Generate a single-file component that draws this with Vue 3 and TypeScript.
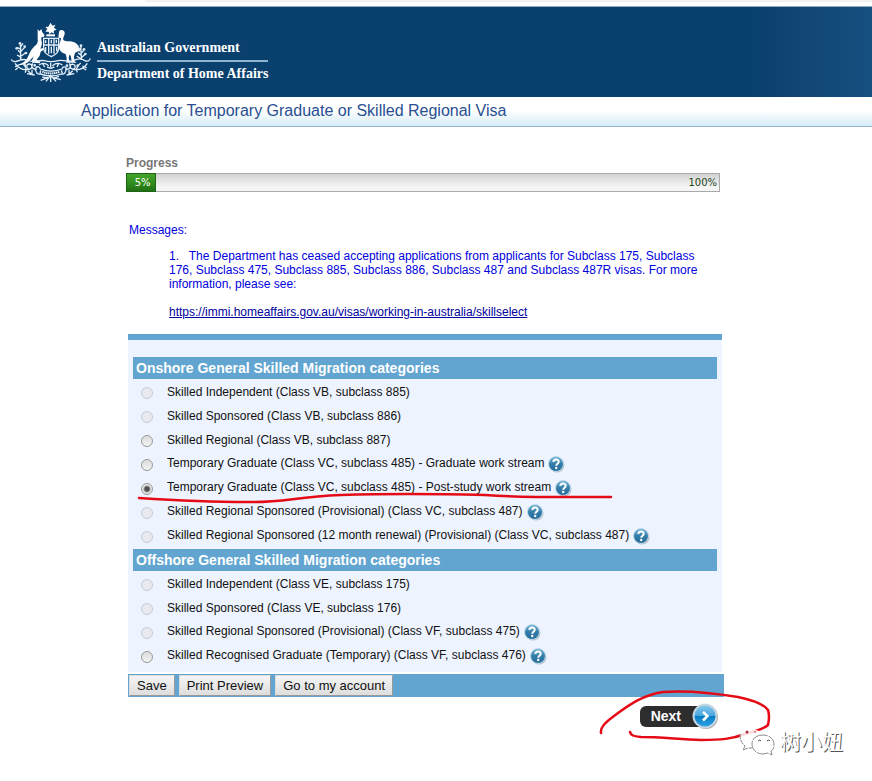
<script setup lang="ts">
import { ref } from 'vue'

interface Visa {
  id: string
  label: string
  disabled?: boolean
  help?: boolean
}

interface Category {
  title: string
  visas: Visa[]
}

const progress = 5
const selected = ref('485-study')

const categories: Category[] = [
  {
    title: 'Onshore General Skilled Migration categories',
    visas: [
      { id: '885', label: 'Skilled Independent (Class VB, subclass 885)', disabled: true },
      { id: '886', label: 'Skilled Sponsored (Class VB, subclass 886)', disabled: true },
      { id: '887', label: 'Skilled Regional (Class VB, subclass 887)' },
      { id: '485-work', label: 'Temporary Graduate (Class VC, subclass 485) - Graduate work stream', help: true },
      { id: '485-study', label: 'Temporary Graduate (Class VC, subclass 485) - Post-study work stream', help: true },
      { id: '487', label: 'Skilled Regional Sponsored (Provisional) (Class VC, subclass 487)', disabled: true, help: true },
      { id: '487-renewal', label: 'Skilled Regional Sponsored (12 month renewal) (Provisional) (Class VC, subclass 487)', disabled: true, help: true },
    ],
  },
  {
    title: 'Offshore General Skilled Migration categories',
    visas: [
      { id: '175', label: 'Skilled Independent (Class VE, subclass 175)', disabled: true },
      { id: '176', label: 'Skilled Sponsored (Class VE, subclass 176)', disabled: true },
      { id: '475', label: 'Skilled Regional Sponsored (Provisional) (Class VF, subclass 475)', disabled: true, help: true },
      { id: '476', label: 'Skilled Recognised Graduate (Temporary) (Class VF, subclass 476)', help: true },
    ],
  },
]

const actions = ['Save', 'Print Preview', 'Go to my account']
</script>

<template>
  <div class="page">
    <div class="browser-edge"></div>
    <header class="banner">
      <svg class="crest" viewBox="30 20 246 183" aria-hidden="true">
        <g fill="#fff">
          <path d="M152 22l5 9 9-3-4 9 8 6-9 3 1 9-7-4-7 6-2-8-10 0 6-8-6-6 9-1z" />
          <path d="M139 57h26v6h-26z" />
          <path d="M113 41l5 7 6-7 3 10 7 9-3 5-7 1 0 8c4 10 1 19-3 26l11-3 2 4-12 8-3 12-9 12 10 6v5l-23-2-2-6 6-11c-6 3-9 8-14 13-8 8-21 13-40 12 19-4 29-12 35-22 8-16 12-28 25-38 7-6 7-16 6-20z" />
          <path d="M177 49c5-8 16-5 17 3 1 8-6 13-4 22 5 5 12 3 21 4 18 2 29 13 29 31-7-3-11 2-15 4l-3 11 1 13 7 5h-18l3-6-3-15-4-3-2 10 3 11 6 3h-16l1-14-3-12c-13-4-21-12-20-24 1-10 7-18 6-24l-8-1z" />
        </g>
        <g fill="none" stroke="#e4effa" stroke-width="4">
          <path d="M131 69h45v30c0 14-10 20-22 25-13-5-23-12-23-25zM131 89h45M146 69v46M162 69v46M137 75v8M154 73v11M169 73v10M137 95v14M154 94v20M170 94v14" />
          <path d="M34 132c2 8 14 8 22 4 13-6 24-4 34 1 12 5 28-4 42-1 14 4 28 4 42 0 18-4 33 6 46 0 12-6 24-7 33-1 8 5 18 2 17-6" />
          <path d="M62 132c-2-20 3-33-2-45M63 114l-9-9M63 108l11-12M62 101l-11-4M61 95l8-11M64 122l13-10M65 127l-14-8M244 133c1-18-3-28-1-42M243 120l-9-8M243 114l9-10M243 105l-8-8M244 127l13-12M245 132l-15-10" />
          <path d="M45 144c12 16 28 22 45 17 10-4 6-16-3-15-8 1-9 11-2 15M262 144c-11 16-28 22-46 17-10-5-5-16 4-14 8 2 7 12 0 15M68 143c10 9 13 22 7 29M242 143c-10 9-16 20-10 28M98 144c-7 12 3 20 12 17M208 144c8 12-2 20-12 17M56 150l-11 4M53 157l-7 7M247 152l13 5M250 159l9 5" />
          <path d="M107 158c6-7 12-3 14 3 22 9 44 8 65 0 2-7 9-9 13-3M106 158c1 16 7 20 16 18 22 8 42 8 62 0 9 2 14-4 15-18M122 165l-2 9M184 165l3 9" />
          <path d="M117 149c11-8 20-6 29 2M187 149c-11-8-20-6-30 2M127 143l7 12M177 143l-6 12M152 142v14M141 155l11 4 11-4M84 166l12 12M96 163v17M218 166l-12 12M207 163v17M81 175l23 4M223 175l-23 4" />
          <path d="M152 180l-14 18M152 180l16 18M152 181v19M144 187l-22 8M160 187l22 6M127 185l18 4M177 183l-18 6" />
        </g>
        <path d="M127 169c17 7 35 7 53 0" fill="none" stroke="#fff" stroke-width="6" stroke-dasharray="4 2" />
        <g fill="#dceaf6">
          <circle cx="60" cy="84" r="4" /><circle cx="74" cy="94" r="4" /><circle cx="50" cy="99" r="4" /><circle cx="78" cy="113" r="4" />
          <circle cx="243" cy="91" r="4" /><circle cx="252" cy="102" r="4" /><circle cx="256" cy="116" r="4" /><circle cx="234" cy="97" r="3" />
          <circle cx="104" cy="150" r="4" /><circle cx="201" cy="151" r="4" /><circle cx="75" cy="150" r="4" /><circle cx="233" cy="151" r="4" />
        </g>
      </svg>
      <div class="brand">
        <span class="brand-line">Australian Government</span>
        <span class="brand-line">Department of Home Affairs</span>
      </div>
    </header>
    <div class="title-bar">
      <h1>Application for Temporary Graduate or Skilled Regional Visa</h1>
    </div>

    <main class="content">
      <section class="progress">
        <h2>Progress</h2>
        <div class="track" role="progressbar" :aria-valuenow="progress" aria-valuemin="0" aria-valuemax="100">
          <span class="fill" :style="{ width: progress + '%' }">{{ progress }}%</span>
          <span>100%</span>
        </div>
      </section>

      <section class="messages">
        <p>Messages:</p>
        <div class="message">
          <p>1.&nbsp;&nbsp; The Department has ceased accepting applications from applicants for Subclass 175, Subclass 176, Subclass 475, Subclass 885, Subclass 886, Subclass 487 and Subclass 487R visas. For more information, please see:</p>
          <a href="https://immi.homeaffairs.gov.au/visas/working-in-australia/skillselect">https://immi.homeaffairs.gov.au/visas/working-in-australia/skillselect</a>
        </div>
      </section>

      <form @submit.prevent>
        <div class="panel">
          <section v-for="category in categories" :key="category.title">
            <h3>{{ category.title }}</h3>
            <div class="options">
              <div v-for="visa in category.visas" :key="visa.id" class="option" :class="{ 'with-help': visa.help }">
                <input :id="'visa-' + visa.id" v-model="selected" type="radio" name="visa" :value="visa.id" :disabled="visa.disabled" />
                <label :for="'visa-' + visa.id">{{ visa.label }}</label>
                <button v-if="visa.help" type="button" class="help" aria-label="Help">
                  <svg viewBox="0 0 18 18" width="18" height="18">
                    <defs>
                      <linearGradient :id="'help-' + visa.id" x2="0" y2="1">
                        <stop offset="0" stop-color="#78b7d8" />
                        <stop offset="0.5" stop-color="#347da9" />
                        <stop offset="1" stop-color="#266b99" />
                      </linearGradient>
                    </defs>
                    <circle cx="10" cy="10" r="7.5" fill="#b4bdc7" />
                    <circle cx="9" cy="9" r="7.5" :fill="`url(#help-${visa.id})`" stroke="#c2dcec" />
                    <path d="M6.4 7c0-3.4 5.3-3.4 5.3-.3 0 2-2.5 2-2.5 4.1" fill="none" stroke="#fff" stroke-width="2" />
                    <circle cx="9.2" cy="13" r="1.2" fill="#fff" />
                  </svg>
                </button>
                <svg v-if="visa.id === '485-study'" class="underline" viewBox="0 0 480 14" width="480" height="14" aria-hidden="true">
                  <path d="M4 7C35 9 70 11 112 11 148 12 158 6 206 4 265 2 312 3 350 4 392 7 430 6 476 6" />
                </svg>
              </div>
            </div>
          </section>
        </div>
        <div class="actions">
          <button v-for="action in actions" :key="action" type="button">{{ action }}</button>
        </div>
        <div class="submit">
          <button type="submit" class="next">
            <span>Next</span>
            <svg viewBox="0 0 28 28" width="28" height="28" aria-hidden="true">
              <defs>
                <linearGradient id="next-blue" x2="0" y2="1">
                  <stop offset="0" stop-color="#8ccbed" />
                  <stop offset="0.48" stop-color="#48a6df" />
                  <stop offset="0.52" stop-color="#087bc5" />
                  <stop offset="1" stop-color="#34a8e8" />
                </linearGradient>
              </defs>
              <circle cx="15" cy="15" r="12" fill="#888" opacity="0.7" />
              <circle cx="14" cy="14" r="11.5" fill="url(#next-blue)" stroke="#c5d6e1" stroke-width="2" />
              <path d="M12 10l4.5 4-4.5 4.5" fill="none" stroke="#fff" stroke-width="2.5" />
            </svg>
          </button>
          <svg class="ring" viewBox="598 688 176 56" width="176" height="56" aria-hidden="true">
            <path d="M601 733C600 727 606 722 614 716 630 704 643 695 663 692 690 690 714 693 738 697 752 700 764 704 768 710 770 716 769 720 768 725 764 729 755 731 745 734 732 739 721 740 701 740 677 739 659 737 641 737 632 736 631 735 630 732" />
          </svg>
          <div class="watermark">
            <svg viewBox="0 0 36 28" width="36" height="28" aria-hidden="true">
              <path d="M12 1C5 1 1 5 1 10c0 4 2 6 5 8l-2 4 6-3h7c5-1 7-5 7-9 0-5-5-9-12-9z" fill="#fff" opacity="0.85" />
              <path d="M1 6c0 5 1 9 5 12l-2 4 5-2h4" fill="none" stroke="#888" stroke-dasharray="5 1" />
              <circle cx="8" cy="4" r="1.5" fill="#a03038" />
              <circle cx="16" cy="4" r="1" fill="#d0767c" />
              <path d="M24 7c-7 0-11 4-11 9s4 10 11 10l5-1 4 2-1-4c3-2 3-4 3-7 0-5-5-9-11-9z" fill="#fff" stroke="#888" stroke-dasharray="12 1" />
              <path d="M19 13q2-2 3 0M28 13q2-2 3 0" fill="none" stroke="#444" />
            </svg>
            <span>树小妞</span>
          </div>
        </div>
      </form>
    </main>
  </div>
</template>

<style>
body {
  margin: 0;
  background: #fff;
}
</style>

<style scoped>
.page {
  min-height: 100vh;
  overflow-x: hidden;
  font: 12px/14px "Liberation Sans", Arial, sans-serif;
  color: #111;
}

h1, h2, h3, p {
  margin: 0;
}

.browser-edge {
  height: 4px;
  margin-left: 145px;
  border-bottom: 2px solid #fff;
  background: linear-gradient(#f1f3f2 2px, #fff 2px);
}

.banner {
  display: flex;
  align-items: center;
  gap: 5px;
  height: 90px;
  padding-left: 10px;
  border-top: 1px solid #91adb9;
  background: linear-gradient(90deg, #0a406e 87%, #124673 92%, #165081);
}

.crest {
  width: 82px;
  height: 61px;
}

.brand {
  display: flex;
  flex-direction: column;
  padding-top: 16px;
  font: bold 14px/24px "Liberation Serif", "Times New Roman", serif;
  color: #fff;
}

.brand-line + .brand-line {
  border-top: 2px solid #8db5d3;
  line-height: 23px;
}

.title-bar {
  height: 29px;
  padding-left: 81px;
  border-bottom: 1px solid #8fb3ca;
  background: linear-gradient(#fff 45%, #d5ecf7);
}

h1 {
  font-size: 16px;
  font-weight: normal;
  line-height: 28px;
  color: #294f91;
}

.content {
  max-width: 596px;
  margin-left: 128px;
  padding-top: 29px;
}

.progress {
  margin: 0 4px 0 -2px;
}

h2 {
  margin-bottom: 3px;
  font-size: 12px;
  line-height: 14px;
  color: #777;
}

.track {
  display: flex;
  justify-content: space-between;
  box-sizing: border-box;
  height: 19px;
  padding-right: 2px;
  border: 1px solid #aaa;
  background: linear-gradient(#d2d2d2, #f5f5f5 75%);
  font: 10px/17px "DejaVu Sans", Verdana, sans-serif;
  color: #24451a;
}

.fill {
  box-sizing: border-box;
  margin: -1px;
  padding-right: 4px;
  border: 1px solid #1d6514;
  background: linear-gradient(#43a32b, #328d1d 55%, #216f16);
  color: #fff;
  text-align: right;
}

.messages {
  margin-top: 31px;
  padding-left: 1px;
  color: #0000e0;
}

.message {
  display: grid;
  gap: 14px;
  padding: 12px 16px 15px 40px;
}

.message a {
  justify-self: start;
  color: #0000a0;
}

.panel {
  margin-right: 2px;
  padding: 17px 5px 3px;
  border-top: 6px solid #62a5d0;
  background: #edf3ff;
}

h3 {
  padding-left: 3px;
  background: #62a5d0;
  font-size: 14px;
  line-height: 22px;
  color: #fff;
}

.options {
  padding: 1px 0;
}

.option {
  position: relative;
  display: flex;
  align-items: center;
  height: 24px;
  padding-left: 8px;
}

.option input {
  appearance: none;
  width: 12px;
  height: 12px;
  margin: 2px 14px 0 0;
  border: 1px solid #999;
  border-radius: 50%;
  background: linear-gradient(#dcdcdc, #f2f2f2);
}

.option input:disabled {
  border-color: #c8cbd2;
  background: #e8eaef;
}

.option input:checked {
  background: radial-gradient(circle, #505050 2px, #e6e6e6 4px);
}

.with-help label {
  padding-bottom: 2px;
}

.help {
  display: flex;
  margin-left: 3px;
  padding: 0 0 1px;
  border: 0;
  background: none;
}

.underline {
  position: absolute;
  z-index: 1;
  top: 15px;
  left: 2px;
  pointer-events: none;
}

.underline path,
.ring path {
  fill: none;
  stroke: #e50b16;
  stroke-width: 2.5;
  stroke-linecap: round;
}

.actions {
  display: flex;
  gap: 4px;
  margin-top: 2px;
  padding: 1px;
  background: #62a5d0;
}

.actions button {
  height: 21px;
  padding: 0 7px;
  border: 1px solid #aaa;
  border-color: #ddd #999 #999 #ddd;
  background: linear-gradient(#f5f5f5, #ddd);
  font: 13px/15px "Liberation Sans", Arial, sans-serif;
  color: #111;
}

.submit {
  position: relative;
  display: flex;
  justify-content: flex-end;
  padding: 5px 5px 0 0;
}

.next {
  display: flex;
  align-items: center;
  padding: 0;
  border: 0;
  background: none;
  font: bold 14px/21px "Liberation Sans", Arial, sans-serif;
  color: #fff;
}

.next span {
  margin-right: -13px;
  padding: 0 23px 0 11px;
  border-radius: 6px;
  background: #2d2d2d;
}

.next svg {
  position: relative;
}

.ring {
  position: absolute;
  top: -9px;
  left: 470px;
  pointer-events: none;
}

.watermark {
  position: absolute;
  top: 31px;
  left: 611px;
  display: flex;
  align-items: flex-start;
  gap: 5px;
  font: 21px/24px "Noto Sans CJK SC", sans-serif;
  color: #fff;
  text-shadow: 1px 1px 0 #555;
  white-space: nowrap;
}
</style>
